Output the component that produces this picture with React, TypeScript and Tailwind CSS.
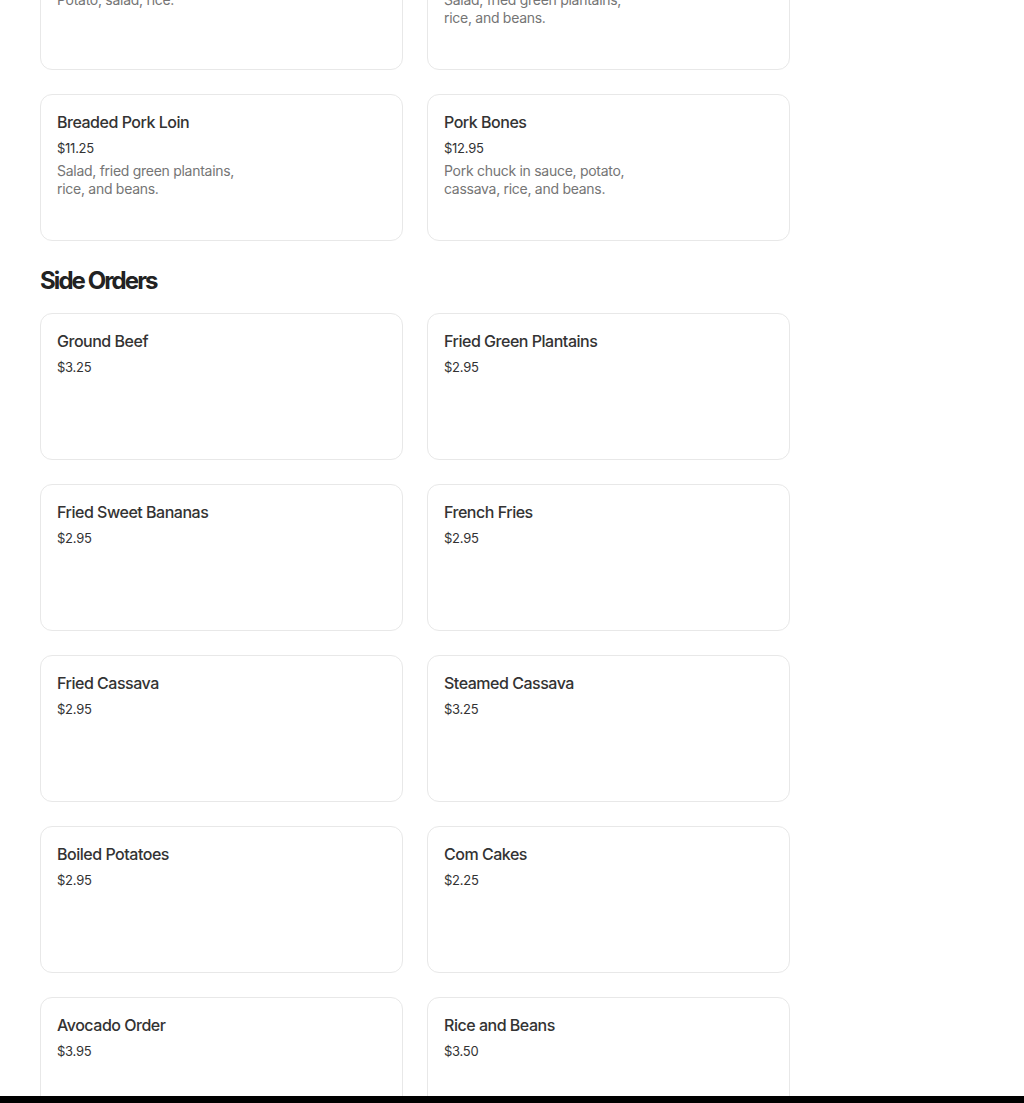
type Item = { name: string; price: string; desc?: string[] }

const mains: Item[] = [
  { name: 'Grilled Chicken', price: '$10.95', desc: ['Potato, salad, rice.'] },
  { name: 'Fried Pork', price: '$11.95', desc: ['Salad, fried green plantains,', 'rice, and beans.'] },
  { name: 'Breaded Pork Loin', price: '$11.25', desc: ['Salad, fried green plantains,', 'rice, and beans.'] },
  { name: 'Pork Bones', price: '$12.95', desc: ['Pork chuck in sauce, potato,', 'cassava, rice, and beans.'] },
]

const sides: Item[] = [
  { name: 'Ground Beef', price: '$3.25' },
  { name: 'Fried Green Plantains', price: '$2.95' },
  { name: 'Fried Sweet Bananas', price: '$2.95' },
  { name: 'French Fries', price: '$2.95' },
  { name: 'Fried Cassava', price: '$2.95' },
  { name: 'Steamed Cassava', price: '$3.25' },
  { name: 'Boiled Potatoes', price: '$2.95' },
  { name: 'Com Cakes', price: '$2.25' },
  { name: 'Avocado Order', price: '$3.95' },
  { name: 'Rice and Beans', price: '$3.50' },
  { name: 'Sweet Plantain Order', price: '$3.25' },
  { name: 'Salad', price: '$2.95' },
]

function MenuCard({ item }: { item: Item }) {
  return (
    <div className="h-[147px] rounded-xl border border-[#e8e8e8] bg-white px-4 pt-[15px]">
      <div className="text-base leading-6 font-medium tracking-[-0.03em] text-[#333]">{item.name}</div>
      <div className="mt-1 text-[13px] leading-5 tracking-[-0.02em] text-[#333]">{item.price}</div>
      {item.desc && (
        <div className="mt-1 text-sm leading-[18px] tracking-[-0.02em] text-[#757575]">
          {item.desc.map((line) => (
            <div key={line}>{line}</div>
          ))}
        </div>
      )}
    </div>
  )
}

export default function App() {
  return (
    <div className="h-[1103px] overflow-hidden bg-white font-['Inter',sans-serif]">
      <div className="mt-[-77px] w-[790px] pl-10">
        <div className="grid grid-cols-2 gap-6">
          {mains.map((item) => (
            <MenuCard key={item.name} item={item} />
          ))}
        </div>

        <h2 className="mt-6 mb-4 text-2xl leading-8 font-bold tracking-[-0.08em] text-[#222]">
          Side Orders
        </h2>

        <div className="grid grid-cols-2 gap-6">
          {sides.map((item) => (
            <MenuCard key={item.name} item={item} />
          ))}
        </div>
      </div>
      <div className="fixed right-0 bottom-0 left-0 h-[7px] bg-black" />
    </div>
  )
}
